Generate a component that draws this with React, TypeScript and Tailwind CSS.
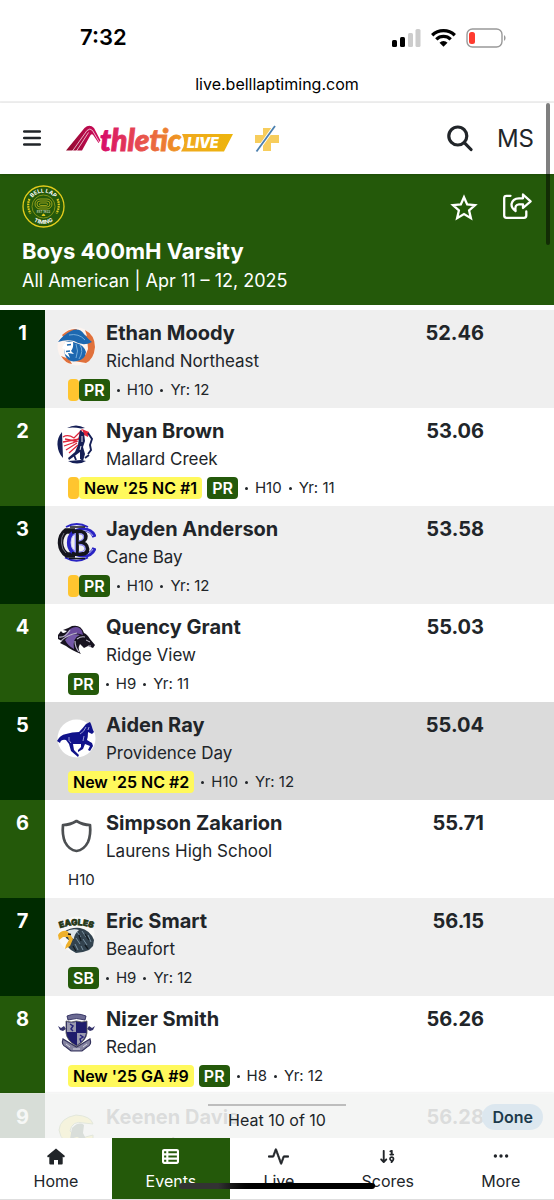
import type { ReactNode } from "react"
import { BsActivity, BsThreeDots } from "react-icons/bs"
import { FaArrowDown19, FaTableList } from "react-icons/fa6"

type Badge = {
  label: string
  kind: "best" | "ranking"
}

type Result = {
  place: number
  name: string
  school: string
  mark: string
  qualified?: boolean
  badges: Badge[]
  details: string[]
  logo: ReactNode
  rowClass: string
}

const results: Result[] = [
  {
    place: 1,
    name: "Ethan Moody",
    school: "Richland Northeast",
    mark: "52.46",
    qualified: true,
    badges: [{ label: "PR", kind: "best" }],
    details: ["H10", "Yr: 12"],
    logo: <CavalierLogo />,
    rowClass: "bg-[#efefef]",
  },
  {
    place: 2,
    name: "Nyan Brown",
    school: "Mallard Creek",
    mark: "53.06",
    qualified: true,
    badges: [
      { label: "New '25 NC #1", kind: "ranking" },
      { label: "PR", kind: "best" },
    ],
    details: ["H10", "Yr: 11"],
    logo: <MaverickLogo />,
    rowClass: "bg-white",
  },
  {
    place: 3,
    name: "Jayden Anderson",
    school: "Cane Bay",
    mark: "53.58",
    qualified: true,
    badges: [{ label: "PR", kind: "best" }],
    details: ["H10", "Yr: 12"],
    logo: <CaneBayLogo />,
    rowClass: "bg-[#efefef]",
  },
  {
    place: 4,
    name: "Quency Grant",
    school: "Ridge View",
    mark: "55.03",
    badges: [{ label: "PR", kind: "best" }],
    details: ["H9", "Yr: 11"],
    logo: <BlazerLogo />,
    rowClass: "bg-white",
  },
  {
    place: 5,
    name: "Aiden Ray",
    school: "Providence Day",
    mark: "55.04",
    badges: [{ label: "New '25 NC #2", kind: "ranking" }],
    details: ["H10", "Yr: 12"],
    logo: <ChargerLogo />,
    rowClass: "bg-[#dbdbdb]",
  },
  {
    place: 6,
    name: "Simpson Zakarion",
    school: "Laurens High School",
    mark: "55.71",
    badges: [],
    details: ["H10"],
    logo: <ShieldLogo />,
    rowClass: "bg-white",
  },
  {
    place: 7,
    name: "Eric Smart",
    school: "Beaufort",
    mark: "56.15",
    badges: [{ label: "SB", kind: "best" }],
    details: ["H9", "Yr: 12"],
    logo: <EagleLogo />,
    rowClass: "bg-[#efefef]",
  },
  {
    place: 8,
    name: "Nizer Smith",
    school: "Redan",
    mark: "56.26",
    badges: [
      { label: "New '25 GA #9", kind: "ranking" },
      { label: "PR", kind: "best" },
    ],
    details: ["H8", "Yr: 12"],
    logo: <RedanLogo />,
    rowClass: "bg-white",
  },
  {
    place: 9,
    name: "Keenen Davis",
    school: "Central (Carroll)",
    mark: "56.28",
    badges: [],
    details: ["H9", "Yr: 12"],
    logo: <CentralLogo />,
    rowClass: "bg-[#efefef]",
  },
]

const tabs = [
  { label: "Home", icon: <HomeIcon />, active: false },
  { label: "Events", icon: <FaTableList size={17} />, active: true },
  {
    label: "Live",
    icon: <BsActivity size={21} stroke="currentColor" strokeWidth={0.6} />,
    active: false,
  },
  { label: "Scores", icon: <FaArrowDown19 size={17} />, active: false },
  { label: "More", icon: <BsThreeDots size={18} />, active: false },
]

function App() {
  return (
    <div className="relative flex h-screen flex-col overflow-hidden bg-white font-['Inter','Liberation_Sans',sans-serif] text-[#212529]">
      <StatusBar />
      <SiteHeader />
      <EventHeader />

      <main className="relative mt-[5px] min-h-0 flex-1 overflow-hidden">
        <table aria-label="Results" className="w-full border-collapse text-left">
          <tbody>
            {results.map((result) => (
              <ResultRow key={result.place} result={result} />
            ))}
          </tbody>
        </table>

        <HeatBar />
      </main>

      <TabBar />

      <div className="absolute top-[103px] right-1 z-20 h-[142px] w-1 rounded-full bg-black/50" />
    </div>
  )
}

function StatusBar() {
  return (
    <div className="shrink-0 border-b-2 border-[#efefef] text-black">
      <div className="flex h-[75px] items-center justify-between pr-12 pl-20">
        <p className="text-[22px] font-semibold">7:32</p>

        <div className="flex items-center gap-2.5">
          <svg width="29" height="19" viewBox="0 0 29 19">
            <rect x="0" y="12" width="5" height="7" rx="1.5" />
            <rect x="8" y="9" width="5" height="10" rx="1.5" />
            <rect x="16" y="5" width="5" height="14" rx="1.5" fill="#ccc" />
            <rect x="23.500" y="1" width="5" height="18" rx="1.5" fill="#ccc" />
          </svg>

          <svg width="25" height="19" viewBox="0 0 25 19">
            <g fill="none" stroke="#000" strokeWidth="3.300">
              <path d="M1.200 7.200 a16.200 16.200 0 0 1 22.600 0" />
              <path d="M5.300 11.400 a10.300 10.300 0 0 1 14.400 0" />
            </g>
            <path d="M12.500 18.800 L8.500 14.700 a5.800 5.800 0 0 1 8 0 Z" />
          </svg>

          <svg width="40" height="20" viewBox="0 0 40 20">
            <rect
              x="1"
              y="1"
              width="35"
              height="18"
              rx="5.500"
              fill="none"
              stroke="#999"
              strokeWidth="1.400"
            />
            <rect x="3" y="4" width="6" height="12" rx="2.500" fill="#ff3b30" />
            <path d="M38 7 a3.600 3.600 0 0 1 0 6 Z" fill="#999" />
          </svg>
        </div>
      </div>

      <p className="pb-2 text-center text-base leading-[18px]">
        live.belllaptiming.com
      </p>
    </div>
  )
}

function SiteHeader() {
  return (
    <header className="z-10 flex h-[71px] shrink-0 items-center bg-white pr-5 pl-[23px] shadow-sm">
      <button type="button" aria-label="Open menu">
        <svg
          width="18"
          height="18"
          viewBox="0 0 18 18"
          stroke="#212529"
          strokeWidth="2.500"
          strokeLinecap="round"
        >
          <path d="M1.200 1.500 H16.800 M1.200 8 H16.800 M1.200 14.500 H16.800" />
        </svg>
      </button>

      <a href="#home" aria-label="AthleticLIVE" className="ml-6">
        <AthleticLiveLogo />
      </a>

      <a href="#plus" aria-label="Plus" className="ml-5">
        <svg width="26" height="28" viewBox="0 0 26 28">
          <path
            d="M9 3 H17 V10 H25 V18 H17 V26 H9 V18 H1 V10 H9 Z"
            fill="#f7cd5c"
          />
          <path d="M21.500 0 L2.500 27" stroke="#fff" strokeWidth="3.500" />
          <path d="M21 1 L2.500 26.500" stroke="#4a7fae" strokeWidth="1.800" />
        </svg>
      </a>

      <button type="button" aria-label="Search" className="ml-auto">
        <SearchIcon />
      </button>

      <button type="button" className="ml-6 text-2xl">
        MS
      </button>
    </header>
  )
}

function SearchIcon() {
  return (
    <svg
      width="26"
      height="27"
      viewBox="0 0 26 27"
      fill="none"
      stroke="#212529"
      strokeWidth="3.200"
      strokeLinecap="round"
    >
      <circle cx="10.800" cy="11" r="9" />
      <path d="M17.500 17.800 L24 24.500" />
    </svg>
  )
}

function AthleticLiveLogo() {
  return (
    <svg width="169" height="32" viewBox="0 0 169 32">
      <defs>
        <linearGradient id="word" x1="34" x2="118" gradientUnits="userSpaceOnUse">
          <stop offset="0" stopColor="#d6086b" />
          <stop offset="0.500" stopColor="#e8504f" />
          <stop offset="1" stopColor="#f0a01c" />
        </linearGradient>
        <linearGradient id="banner" x1="116" x2="168" gradientUnits="userSpaceOnUse">
          <stop offset="0" stopColor="#f0a81e" />
          <stop offset="1" stopColor="#edb50c" />
        </linearGradient>
        <linearGradient id="peak" x1="0" x2="34" gradientUnits="userSpaceOnUse">
          <stop offset="0" stopColor="#8e0b2c" />
          <stop offset="1" stopColor="#cf0a5c" />
        </linearGradient>
      </defs>

      <path
        d="M1 27.500 L19.500 5 Q24.500 0.500 29 5 L35.500 17.500 L33.500 20 L28.500 12.500 Q26.500 10 25 13 L17 27.500 Z"
        fill="url(#peak)"
      />
      <path
        d="M7.500 28 L22 7.500 Q25 4.500 27.500 7.500 L34.500 19.500 M11.500 28 L23.500 9.500"
        fill="none"
        stroke="#fff"
        strokeWidth="0.700"
      />

      <text
        x="35"
        y="27.500"
        fontFamily="Lato"
        fontSize="30"
        fontWeight="900"
        fontStyle="italic"
        fill="url(#word)"
        stroke="url(#word)"
        strokeWidth="0.900"
      >
        thletic
      </text>

      <path d="M117 11 H168 L159 28.500 H116 Q122 20 117 11 Z" fill="url(#banner)" />
      <text
        x="122"
        y="24.800"
        fontFamily="Inter"
        fontSize="14"
        fontWeight="900"
        fontStyle="italic"
        fill="#fff"
      >
        LIVE
      </text>
    </svg>
  )
}

function EventHeader() {
  return (
    <section className="h-[131px] shrink-0 bg-[#24590a] px-[22px] pt-[11px] text-white">
      <div className="flex items-start justify-between">
        <BellLapLogo />

        <div className="flex items-center gap-6 pt-2">
          <button type="button" aria-label="Add to favorites">
            <StarIcon />
          </button>
          <button type="button" aria-label="Share">
            <ShareIcon />
          </button>
        </div>
      </div>

      <h1 className="mt-2 text-[22px] leading-[30px] font-bold">
        Boys 400mH Varsity
      </h1>
      <p className="text-[18px] leading-[30px]">
        All American | Apr 11 – 12, 2025
      </p>
    </section>
  )
}

function StarIcon() {
  return (
    <svg
      width="28"
      height="27"
      viewBox="0 0 28 27"
      fill="none"
      stroke="currentColor"
      strokeWidth="2.300"
    >
      <path d="M14 3.200 L17.200 10.500 L25 11.200 L19.100 16.400 L20.900 24.200 L14 20.100 L7.100 24.200 L8.900 16.400 L3 11.200 L10.800 10.500 Z" />
    </svg>
  )
}

function ShareIcon() {
  return (
    <svg
      width="30"
      height="28"
      viewBox="0 0 30 28"
      fill="none"
      stroke="currentColor"
      strokeWidth="2.300"
      strokeLinecap="round"
      strokeLinejoin="round"
    >
      <path d="M8.500 2.800 H4.500 Q2.200 2.800 2.200 5 V22.500 Q2.200 24.800 4.500 24.800 H22 Q24.300 24.800 24.300 22.500 V18.500" />
      <path d="M21 1.500 L28.600 8.300 L21 15 V11.300 H17 Q12.500 11.500 13.600 18 Q9 14.800 9.600 10.800 Q10.600 5.500 17 5.300 H21 Z" />
    </svg>
  )
}

function BellLapLogo() {
  return (
    <svg width="43" height="43" viewBox="0 0 43 43" fill="none">
      <defs>
        <path id="arcTop" d="M7.500 21.500 a14 14 0 0 1 28 0" />
        <path id="arcBottom" d="M4 21.500 a17.500 17.500 0 0 0 35 0" />
      </defs>
      <circle cx="21.500" cy="21.500" r="20.500" stroke="#e3cc1c" strokeWidth="1.300" />
      <circle cx="21.500" cy="21.500" r="11.500" stroke="#a9ab1c" strokeWidth="0.700" />
      <g stroke="#b9b31e" strokeWidth="0.800">
        <rect x="13" y="14" width="17" height="10" rx="5" />
        <rect x="15" y="16" width="13" height="6" rx="3" />
        <rect x="17.500" y="18" width="8" height="2.500" rx="1.200" />
      </g>
      <text
        x="21.500"
        y="28"
        textAnchor="middle"
        fontFamily="Inter"
        fontSize="3"
        fontWeight="700"
        fill="#b9cbae"
      >
        EST 1923
      </text>
      <path d="M19.500 31 Q21.500 26 23.500 31 Z" fill="#e3cc1c" />
      <g stroke="#e3cc1c" strokeWidth="2.200" strokeDasharray="1.600 0.800">
        <path d="M7.500 14 Q4.500 21 8.500 28.500" />
        <path d="M35.500 14 Q38.500 21 34.500 28.500" />
      </g>
      <g fontFamily="Inter" fontSize="5.500" fontWeight="700" fill="#fff">
        <text textAnchor="middle">
          <textPath href="#arcTop" startOffset="50%">
            BELL LAP
          </textPath>
        </text>
        <text textAnchor="middle">
          <textPath href="#arcBottom" startOffset="50%">
            TIMING
          </textPath>
        </text>
      </g>
    </svg>
  )
}

function ResultRow({ result }: { result: Result }) {
  return (
    <tr className={result.rowClass}>
      <td
        className={
          result.place % 2 === 1
            ? "w-[45px] bg-[#002b00] pt-2.5 text-center align-top text-xl leading-[27px] font-bold text-white"
            : "w-[45px] bg-[#24590a] pt-2.5 text-center align-top text-xl leading-[27px] font-bold text-white"
        }
      >
        {result.place}
      </td>

      <td className="pt-2.5 pb-[7px] pl-3 align-top">
        <div className="flex gap-2.5">
          <div className="mt-[7px] size-[39px] shrink-0">{result.logo}</div>

          <div>
            <p className="text-xl leading-[27px] font-bold">{result.name}</p>
            <p className="text-[17px] leading-7">{result.school}</p>
          </div>
        </div>

        <div className="mt-1 flex h-[22px] items-center pl-[11px] text-base whitespace-nowrap">
          {result.qualified && (
            <span className="h-[22px] w-[11px] rounded-[4px] bg-[#ffc52f]" />
          )}

          {result.badges.map((badge) => (
            <span
              key={badge.label}
              className={
                badge.kind === "best"
                  ? "mr-[5px] flex h-[22px] items-center rounded-[4px] bg-[#24590a] px-[5px] font-semibold text-white"
                  : "mr-[5px] flex h-[22px] items-center rounded-[4px] bg-[#fff95c] px-[5px] font-semibold text-black"
              }
            >
              {badge.label}
            </span>
          ))}

          {result.details.map((detail, index) => (
            <span key={detail} className="flex items-center text-[15px]">
              {(index > 0 || result.badges.length > 0) && (
                <span
                  className={
                    index > 0
                      ? "mx-[7px] size-[3px] rounded-full bg-[#212529]"
                      : "mr-[7px] ml-0.5 size-[3px] rounded-full bg-[#212529]"
                  }
                />
              )}
              {detail}
            </span>
          ))}
        </div>
      </td>

      <td className="pt-2.5 pr-[70px] text-right align-top text-xl leading-[27px] font-bold">
        {result.mark}
      </td>
    </tr>
  )
}

function HeatBar() {
  return (
    <div className="absolute inset-x-0 bottom-0 flex h-[45px] justify-center bg-[#f5f6f5]/88 pt-[11px] shadow-[0_0_2px_rgba(0,0,0,0.12)]">
      <div className="flex flex-col items-center">
        <div className="h-0.5 w-[138px] bg-[#bdbdbd]" />
        <p className="mt-0.5 text-base leading-6">Heat 10 of 10</p>
      </div>

      <button
        type="button"
        className="absolute top-[11px] right-[11px] h-[26px] rounded-full bg-[#dce7ef] px-2.5 text-base font-semibold text-[#1c3a4c]"
      >
        Done
      </button>
    </div>
  )
}

function TabBar() {
  return (
    <nav className="relative flex h-[62px] shrink-0 border-b border-[#dedede] bg-white">
      {tabs.map((tab) => (
        <a
          key={tab.label}
          href={`#${tab.label.toLowerCase()}`}
          className={
            tab.active
              ? "flex flex-auto flex-col items-center bg-[#24590a] pt-[7px] text-base text-white"
              : "flex flex-auto flex-col items-center pt-[7px] text-base"
          }
        >
          <span className="flex h-[22px] items-center">{tab.icon}</span>
          <span className="mt-[3px] leading-[22px]">{tab.label}</span>
        </a>
      ))}

      <div className="absolute bottom-2.5 left-1/2 h-1.5 w-[196px] -translate-x-1/2 rounded-full bg-linear-to-r from-[#333] from-20% to-black to-40%" />
    </nav>
  )
}

function HomeIcon() {
  return (
    <svg width="18" height="17" viewBox="0 0 18 16" fill="currentColor">
      <path d="M9 0 L18 7.600 L17 9 L15.700 8.300 V15 Q15.700 16 14.700 16 H11 V11.500 H7 V16 H3.300 Q2.300 16 2.300 15 V8.300 L1 9 L0 7.600 Z" />
    </svg>
  )
}

function CavalierLogo() {
  return (
    <svg viewBox="0 0 39 39">
      <circle cx="19.500" cy="19.500" r="19" fill="#fdf4ef" />
      <path
        d="M5 8 Q12 1 20 2 L17 7 Q10 6 7 11 Z M28 3 Q38 8 38 20 Q37 32 29 36 L17 34 Q28 33 31 22 Q31 10 22 6 L30 9 Z M4 29 Q8 36 15 37 L12 32 Z"
        fill="#e0713c"
      />
      <path
        d="M1 15 Q6 8 14 4 Q22 0 27 7 Q31 12 35 15 Q26 20 17 14 Q9 12 1 15 Z"
        fill="#1d68b0"
      />
      <path
        d="M8 15 Q13 13 19 16 Q27 18 29 25 Q28 33 20 34 Q11 36 8 28 L7 22 Z"
        fill="#1d68b0"
      />
      <path d="M8 15 L16 15 Q17 20 14 24 L17 27 L11 26 L13 31 L8 27 L7 22 L5 21 Z" fill="#fff" />
      <path d="M10 18 L14 17.500 M9 24.500 L13 24" stroke="#1d68b0" strokeWidth="1.400" />
      <path d="M19 17 Q22 24 19 31 M23 18 Q27 24 22 32 M12 8 Q22 6 28 13" fill="none" stroke="#7eb3de" strokeWidth="0.900" />
    </svg>
  )
}

function MaverickLogo() {
  return (
    <svg viewBox="0 0 39 39">
      <circle cx="19.500" cy="19.500" r="19" fill="#fff" />
      <path d="M5 7 Q0 13 0.500 20 Q1 28 6 33 Z M10 3 Q19 -2 28 3 L24 3.500 Q17 2 10 3 Z M11 36 Q20 41 29 36 L24 35 Z" fill="#151f56" />
      <path
        d="M6 12 Q11 9 17 13 L24 6 L22 13 L16 18 M6 17 L22 14 M7 21 L21 16 M9 25 L20 18 M12 28 L21 20 M8 14 L18 16"
        fill="none"
        stroke="#e0253b"
        strokeWidth="1.300"
      />
      <path d="M25 4 L32 7 L31 12 L27 10 Z" fill="#e0253b" />
      <path
        d="M23 5 L27 8 L28 16 L26 22 L28 29 L26 36 L23 34 L23 27 L19 30 L12 35 L11 33 L18 27 L21 20 L22 12 Z"
        fill="#151f56"
      />
      <path
        d="M31 8 L35 14 L33 20 L34 25 L31 29 M17 30 L19 35 M28 33 L32 30"
        fill="none"
        stroke="#151f56"
        strokeWidth="1.900"
      />
      <path d="M25 11 V17 M24 21 L23 25" stroke="#fff" strokeWidth="0.900" />
    </svg>
  )
}

function CaneBayLogo() {
  return (
    <svg viewBox="0 0 39 39" fill="none">
      <path d="M9 4 Q19.500 -2 31 4 M8 34.500 Q19.500 41 31 34.500" stroke="#2a24c4" strokeWidth="1.800" />
      <path d="M18 8 H9 Q3.500 12 3.500 20 Q4 28 10 32 H18" stroke="#14141c" strokeWidth="5.500" />
      <path d="M37.500 14 Q35 6.500 26 6.500 Q12 8 12 19.500 Q12 31 26 32.500 Q35 32.500 37.500 25" stroke="#2a24c4" strokeWidth="4.200" />
      <path d="M36 13 Q33 7.500 26 7.500 Q14 9 14 19.500 Q14 30 26 31.500 Q33 31.500 36 26" stroke="#d6d6f4" strokeWidth="0.800" />
      <path d="M15 8.500 H24 Q30 10 28.500 15.500 Q27 19 22 19.500 Q30 20 30.500 26 Q30.500 31 25 31 H15 M20 8.500 V31" stroke="#14141c" strokeWidth="3.800" />
      <path d="M18.300 10 V29.500 M21.700 11 Q27 10.500 26.500 14.500 Q26 17.500 21.700 18 M21.700 21.500 Q28 21.500 28 25.500 Q27.500 29 21.700 29" stroke="#8d8af0" strokeWidth="1.300" />
      <path d="M7 10 Q4 14 4.500 20 Q5 27 9 30" stroke="#8a8a99" strokeWidth="0.800" />
      <path d="M13 4 H28 M12 35.500 H28" stroke="#14141c" strokeWidth="1.600" />
    </svg>
  )
}

function BlazerLogo() {
  return (
    <svg viewBox="0 0 39 39">
      <path
        d="M1 14 L4 10 Q6 14 10 10 L6 9 Q12 7 15 5 Q24 3 27 12 Q30 13 33 18 L38 24 L36 27 L31 25 L27 27 L23 23 Q20 28 24 33 Q14 29 9 25 L3 22 L5 20 L1 18 Z"
        fill="#17131f"
      />
      <path d="M13 8 Q21 3 25 10 L26 14 Q18 10 11 16 L7 16 Q10 11 13 8 Z" fill="#6a4b9c" />
      <path d="M8 19 Q14 11 23 14 Q15 17 17 28 Q11 25 8 19 Z" fill="#7458a8" />
      <path d="M2 16 Q8 17 13 9 M4 20 Q10 14 20 12 M20 18 Q24 15 28 16 M18 20 Q18 26 22 31" fill="none" stroke="#b9b4c8" strokeWidth="1.200" />
      <path d="M29 19 L33 21 M31 25 L34 25" stroke="#d8d4e2" strokeWidth="0.900" />
    </svg>
  )
}

function ChargerLogo() {
  return (
    <svg viewBox="0 0 39 39">
      <circle cx="19.500" cy="19.500" r="19" fill="#fff" />
      <path
        d="M0 22 Q3 16 9 15 Q15 13 22 13 Q26 9 29 5 L33 3 L34 5 L36 11 L37 13 L35 15 L31 13 Q31 18 30 21 L35 24 L36 27 L33 32 L31 31 L33 27 L28 25 L26 30 L21 33 L21 31 L24 28 L24 25 L16 25 L17 31 L22 36 L21 38 L14 32 L12 25 L9 21 Q4 20 3 24 Z"
        fill="#10128a"
      />
      <path d="M29 8 Q27 13 23 15 M32 8 L31 11 M12 18 Q11 22 14 24 M27 17 L26 22" fill="none" stroke="#b9bce8" strokeWidth="0.800" />
    </svg>
  )
}

function ShieldLogo() {
  return (
    <svg viewBox="0 0 39 39" fill="none" stroke="#4c4f52" strokeWidth="2.700" strokeLinejoin="round">
      <path d="M19.500 4 Q26 8 33 8 Q34 18 31 25 Q27 33 19.500 34 Q12 33 8 25 Q5 18 6 8 Q13 8 19.500 4 Z" />
    </svg>
  )
}

function EagleLogo() {
  return (
    <svg viewBox="0 0 39 39">
      <circle cx="19.500" cy="19.500" r="18" fill="#f8f8f6" />
      <path id="eaglesArc" d="M0 14.500 Q19.500 6 39 14.500" fill="none" />
      <text
        fontFamily="Inter"
        fontSize="8.500"
        fontWeight="900"
        fill="#294216"
        stroke="#15220c"
        strokeWidth="0.500"
        textAnchor="middle"
      >
        <textPath href="#eaglesArc" startOffset="50%">
          EAGLES
        </textPath>
      </text>
      <path
        d="M7 17 Q14 12 23 13 Q33 15 37 25 L36 31 L32 35 L26 37 L19 38 L14 35 L11 32 L13 26 L9 23 Z"
        fill="#33434f"
      />
      <path d="M8 17 Q15 13 22 15 Q17 19 17 24 L11 21 Z" fill="#dfe6ea" />
      <path d="M10 16 Q4 15 1 20 L2 25 L6 22 L11 22 L12 25 L9 30 L8 34 L13 31 L16 24 L13 19 Z" fill="#eeb02a" />
      <path d="M11 19 L14 19.500" stroke="#111" strokeWidth="1.500" />
      <path
        d="M20 17 L24 22 M25 16 L29 22 M19 23 L23 29 M26 24 L30 30 M18 29 L21 35 M31 20 L34 27 M24 31 L26 35"
        stroke="#7890a0"
        strokeWidth="1"
      />
      <path d="M22 20 L24 26 M28 19 L32 25 M16 31 L19 36 M28 30 L31 34" stroke="#121a20" strokeWidth="1.300" />
    </svg>
  )
}

function RedanLogo() {
  return (
    <svg viewBox="0 0 39 39">
      <path d="M10 3 Q19.500 -1 29 3 L28 7 Q19.500 4 11 7 Z" fill="#6b6a92" stroke="#2b2a5c" strokeWidth="0.900" />
      <path
        d="M1 13 L4 15 L7 13 L9 16 L6 18 L3 17 Z M38 13 L35 15 L32 13 L30 16 L33 18 L36 17 Z"
        fill="#34336b"
      />
      <path
        d="M6 26 Q4 32 9 34 L14 38 H25 L30 34 Q35 32 33 26 L28 29 L19.500 34 L11 29 Z"
        fill="#8584a0"
        stroke="#34335c"
        strokeWidth="1.200"
      />
      <path d="M9 8 Q14 10 19.500 8 Q25 10 30 8 V20 Q29 28 19.500 33 Q10 28 9 20 Z" fill="#1e1c6c" stroke="#555" strokeWidth="0.800" />
      <path d="M10 9 Q14 10 19 9 V19 H10 Z M20 20 H29 Q28 27 20 32 Z" fill="#9a9aae" />
      <path d="M13 11 L16 13 L14 16 L16 18 M23 22 L26 24 L23 26 L24 29" fill="none" stroke="#26247a" strokeWidth="1.500" />
      <path d="M9 31 L13 34 M16 36 H23 M26 34 L30 31" stroke="#e0e0ea" strokeWidth="0.900" />
    </svg>
  )
}

function CentralLogo() {
  return (
    <svg viewBox="0 0 39 39">
      <path
        d="M36 13 Q34 5 19 4 Q3 7 2 19 Q4 33 20 34 L36 30 L36 24 Q20 30 13 20 Q15 9 27 12 Z"
        fill="#f1dd33"
        stroke="#5d7a2c"
        strokeWidth="1"
      />
      <path d="M15 17 Q22 10 27 14 L26 22 L30 30 L20 26 L13 28 Z" fill="#16301c" />
    </svg>
  )
}

export default App
